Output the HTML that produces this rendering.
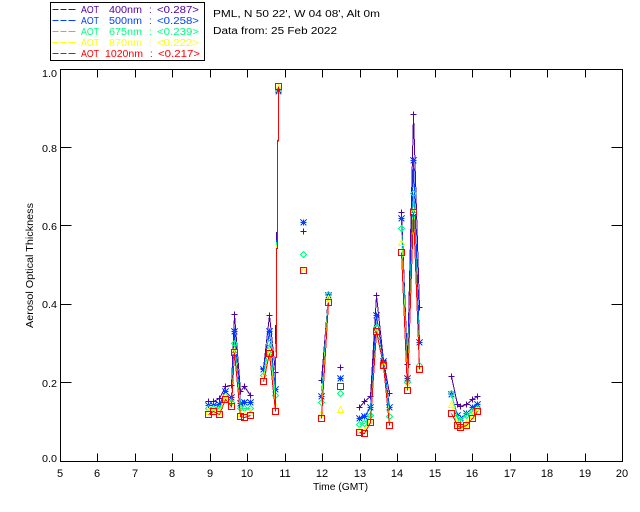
<!DOCTYPE html>
<html><head><meta charset="utf-8"><style>
html,body{margin:0;padding:0;background:#fff}
svg{display:block;font-family:"Liberation Sans",sans-serif;font-size:10px}
.c path,.c polyline,.c line,.c rect{shape-rendering:crispEdges}
path,polyline{fill:none}
</style></head><body>
<svg width="640" height="512" viewBox="0 0 640 512" xmlns="http://www.w3.org/2000/svg">
<defs>
<path id="a" d="M-3 0h6M0-3v6"/>
<path id="b" d="M-3 0h6M0-3v6M-3-3l6 6M-3 3l6-6"/>
<path id="c" d="M0-3l3 3l-3 3l-3-3z"/>
<path id="d" d="M0-3l3 6h-6z"/>
<path id="e" d="M-3-3h6v6h-6z"/>
</defs>
<g class="c" transform="translate(.5 .5)" stroke="#000" shape-rendering="crispEdges">
<path d="M60 69H622V461H60ZM97 69v8M135 69v8M172 69v8M210 69v8M247 69v8M285 69v8M322 69v8M360 69v8M397 69v8M435 69v8M472 69v8M510 69v8M547 69v8M585 69v8M97 461v-8M135 461v-8M172 461v-8M210 461v-8M247 461v-8M285 461v-8M322 461v-8M360 461v-8M397 461v-8M435 461v-8M472 461v-8M510 461v-8M547 461v-8M585 461v-8M60 147h11M60 225h11M60 304h11M60 382h11M622 147h-11M622 225h-11M622 304h-11M622 382h-11"/>
<path d="M50 2H204V60H50Z"/>
<path stroke="#5000a0" d="M52 9h6M60 9h6M68 9h7"/>
<path stroke="#0040ff" d="M52 20h6M60 20h6M68 20h7"/>
<path stroke="#00ff80" d="M52 31h6M60 31h6M68 31h7"/>
<path stroke="#ffff00" d="M52 42h6M60 42h6M68 42h7"/>
<path stroke="#ff0000" d="M52 53h6M60 53h6M68 53h7"/>
</g>
<g class="c" transform="translate(.5 .5)" shape-rendering="crispEdges">
<g stroke="#5000a0">
<polyline points="208,401 213,401 219,398 225,386 231,385 234,314 240,391 244,386 250,395"/>
<polyline points="263,368 269,315 275,372"/>
<path d="M278 92V139H277V232H276V325H275V372"/>
<polyline points="321,380 328,294"/>
<polyline points="359,407 364,401 370,396 376,295 383,360 389,393"/>
<polyline points="401,212 407,364 413,114 419,307"/>
<polyline points="451,376 457,404 460,406 466,404 472,399 477,396"/>
<use href="#a" x="208" y="401"/><use href="#a" x="213" y="401"/><use href="#a" x="219" y="398"/><use href="#a" x="225" y="386"/><use href="#a" x="231" y="385"/><use href="#a" x="234" y="314"/><use href="#a" x="240" y="391"/><use href="#a" x="244" y="386"/><use href="#a" x="250" y="395"/>
<use href="#a" x="263" y="368"/><use href="#a" x="269" y="315"/><use href="#a" x="275" y="372"/><use href="#a" x="278" y="92"/>
<use href="#a" x="303" y="231"/><use href="#a" x="321" y="380"/><use href="#a" x="328" y="294"/><use href="#a" x="340" y="367"/>
<use href="#a" x="359" y="407"/><use href="#a" x="364" y="401"/><use href="#a" x="370" y="396"/><use href="#a" x="376" y="295"/><use href="#a" x="383" y="360"/><use href="#a" x="389" y="393"/>
<use href="#a" x="401" y="212"/><use href="#a" x="407" y="364"/><use href="#a" x="413" y="114"/><use href="#a" x="419" y="307"/>
<use href="#a" x="451" y="376"/><use href="#a" x="457" y="404"/><use href="#a" x="460" y="406"/><use href="#a" x="466" y="404"/><use href="#a" x="472" y="399"/><use href="#a" x="477" y="396"/>
</g>
<g stroke="#0040ff">
<polyline points="208,405 213,405 219,404 225,391 231,397 234,331 240,403 244,402 250,402"/>
<polyline points="263,369 269,331 275,389"/>
<path d="M278 91V141H277V240H276V339H275V389"/>
<polyline points="321,396 328,295"/>
<polyline points="359,418 364,416 370,407 376,315 383,361 389,407"/>
<polyline points="401,218 407,378 413,160 419,342"/>
<polyline points="451,394 457,415 460,418 466,413 472,407 477,404"/>
<use href="#b" x="208" y="405"/><use href="#b" x="213" y="405"/><use href="#b" x="219" y="404"/><use href="#b" x="225" y="391"/><use href="#b" x="231" y="397"/><use href="#b" x="234" y="331"/><use href="#b" x="240" y="403"/><use href="#b" x="244" y="402"/><use href="#b" x="250" y="402"/>
<use href="#b" x="263" y="369"/><use href="#b" x="269" y="331"/><use href="#b" x="275" y="389"/><use href="#b" x="278" y="91"/>
<use href="#b" x="303" y="222"/><use href="#b" x="321" y="396"/><use href="#b" x="328" y="295"/><use href="#b" x="340" y="378"/>
<use href="#b" x="359" y="418"/><use href="#b" x="364" y="416"/><use href="#b" x="370" y="407"/><use href="#b" x="376" y="315"/><use href="#b" x="383" y="361"/><use href="#b" x="389" y="407"/>
<use href="#b" x="401" y="218"/><use href="#b" x="407" y="378"/><use href="#b" x="413" y="160"/><use href="#b" x="419" y="342"/>
<use href="#b" x="451" y="394"/><use href="#b" x="457" y="415"/><use href="#b" x="460" y="418"/><use href="#b" x="466" y="413"/><use href="#b" x="472" y="407"/><use href="#b" x="477" y="404"/>
</g>
<g stroke="#00ff80">
<polyline points="208,408 213,408 219,408 225,396 231,402 234,343 240,408 244,408 250,408"/>
<polyline points="263,375 269,343 275,395"/>
<path d="M278 90V141H277V242H276V344H275V395"/>
<polyline points="321,402 328,294"/>
<polyline points="359,424 364,423 370,415 376,327 383,365 389,416"/>
<polyline points="401,228 407,382 413,193 419,365"/>
<polyline points="451,393 457,418 460,420 466,415 472,411 477,408"/>
<use href="#c" x="208" y="408"/><use href="#c" x="213" y="408"/><use href="#c" x="219" y="408"/><use href="#c" x="225" y="396"/><use href="#c" x="231" y="402"/><use href="#c" x="234" y="343"/><use href="#c" x="240" y="408"/><use href="#c" x="244" y="408"/><use href="#c" x="250" y="408"/>
<use href="#c" x="263" y="375"/><use href="#c" x="269" y="343"/><use href="#c" x="275" y="395"/><use href="#c" x="278" y="90"/>
<use href="#c" x="303" y="254"/><use href="#c" x="321" y="402"/><use href="#c" x="328" y="294"/><use href="#c" x="340" y="393"/>
<use href="#c" x="359" y="424"/><use href="#c" x="364" y="423"/><use href="#c" x="370" y="415"/><use href="#c" x="376" y="327"/><use href="#c" x="383" y="365"/><use href="#c" x="389" y="416"/>
<use href="#c" x="401" y="228"/><use href="#c" x="407" y="382"/><use href="#c" x="413" y="193"/><use href="#c" x="419" y="365"/>
<use href="#c" x="451" y="393"/><use href="#c" x="457" y="418"/><use href="#c" x="460" y="420"/><use href="#c" x="466" y="415"/><use href="#c" x="472" y="411"/><use href="#c" x="477" y="408"/>
</g>
<g stroke="#ffff00">
<polyline points="208,411 213,409 219,411 225,396 231,404 234,350 240,413 244,414 250,412"/>
<polyline points="263,378 269,350 275,405"/>
<path d="M278 86V139H277V245H276V352H275V405"/>
<polyline points="321,413 328,298"/>
<polyline points="359,430 364,430 370,420 376,330 383,365 389,422"/>
<polyline points="401,242 407,385 413,210 419,368"/>
<polyline points="451,404 457,423 460,425 466,423 472,415 477,410"/>
<use href="#d" x="208" y="411"/><use href="#d" x="213" y="409"/><use href="#d" x="219" y="411"/><use href="#d" x="225" y="396"/><use href="#d" x="231" y="404"/><use href="#d" x="234" y="350"/><use href="#d" x="240" y="413"/><use href="#d" x="244" y="414"/><use href="#d" x="250" y="412"/>
<use href="#d" x="263" y="378"/><use href="#d" x="269" y="350"/><use href="#d" x="275" y="405"/><use href="#d" x="278" y="86"/>
<use href="#d" x="303" y="270"/><use href="#d" x="321" y="413"/><use href="#d" x="328" y="298"/><use href="#d" x="340" y="409"/>
<use href="#d" x="359" y="430"/><use href="#d" x="364" y="430"/><use href="#d" x="370" y="420"/><use href="#d" x="376" y="330"/><use href="#d" x="383" y="365"/><use href="#d" x="389" y="422"/>
<use href="#d" x="401" y="242"/><use href="#d" x="407" y="385"/><use href="#d" x="413" y="210"/><use href="#d" x="419" y="368"/>
<use href="#d" x="451" y="404"/><use href="#d" x="457" y="423"/><use href="#d" x="460" y="425"/><use href="#d" x="466" y="423"/><use href="#d" x="472" y="415"/><use href="#d" x="477" y="410"/>
</g>
<g stroke="#ff0000">
<polyline points="208,414 213,411 219,414 225,399 231,406 234,352 240,416 244,417 250,415"/>
<polyline points="263,381 269,353 275,411"/>
<path d="M278 86V140H277V248H276V357H275V411"/>
<polyline points="321,418 328,302"/>
<polyline points="359,432 364,433 370,422 376,331 383,365 389,425"/>
<polyline points="401,252 407,390 413,212 419,369"/>
<polyline points="451,413 457,425 460,427 466,425 472,418 477,411"/>
<use href="#e" x="208" y="414"/><use href="#e" x="213" y="411"/><use href="#e" x="219" y="414"/><use href="#e" x="225" y="399"/><use href="#e" x="231" y="406"/><use href="#e" x="234" y="352"/><use href="#e" x="240" y="416"/><use href="#e" x="244" y="417"/><use href="#e" x="250" y="415"/>
<use href="#e" x="263" y="381"/><use href="#e" x="269" y="353"/><use href="#e" x="275" y="411"/><use href="#e" x="278" y="86"/>
<use href="#e" x="303" y="270"/><use href="#e" x="321" y="418"/><use href="#e" x="328" y="302"/><use href="#e" x="340" y="386"/>
<use href="#e" x="359" y="432"/><use href="#e" x="364" y="433"/><use href="#e" x="370" y="422"/><use href="#e" x="376" y="331"/><use href="#e" x="383" y="365"/><use href="#e" x="389" y="425"/>
<use href="#e" x="401" y="252"/><use href="#e" x="407" y="390"/><use href="#e" x="413" y="212"/><use href="#e" x="419" y="369"/>
<use href="#e" x="451" y="413"/><use href="#e" x="457" y="425"/><use href="#e" x="460" y="427"/><use href="#e" x="466" y="425"/><use href="#e" x="472" y="418"/><use href="#e" x="477" y="411"/>
</g>
</g>
<g fill="#5000a0"><text x="81" y="13" textLength="18" lengthAdjust="spacingAndGlyphs">AOT</text><text x="109" y="13" textLength="33" lengthAdjust="spacingAndGlyphs">400nm</text><text x="149" y="13">:</text><text x="157" y="13" textLength="42" lengthAdjust="spacingAndGlyphs">&lt;0.287&gt;</text></g>
<g fill="#0040ff"><text x="81" y="24" textLength="18" lengthAdjust="spacingAndGlyphs">AOT</text><text x="109" y="24" textLength="33" lengthAdjust="spacingAndGlyphs">500nm</text><text x="149" y="24">:</text><text x="157" y="24" textLength="42" lengthAdjust="spacingAndGlyphs">&lt;0.258&gt;</text></g>
<g fill="#00ff80"><text x="81" y="35" textLength="18" lengthAdjust="spacingAndGlyphs">AOT</text><text x="109" y="35" textLength="33" lengthAdjust="spacingAndGlyphs">675nm</text><text x="149" y="35">:</text><text x="157" y="35" textLength="42" lengthAdjust="spacingAndGlyphs">&lt;0.239&gt;</text></g>
<g fill="#ffff00"><text x="81" y="46" textLength="18" lengthAdjust="spacingAndGlyphs">AOT</text><text x="109" y="46" textLength="33" lengthAdjust="spacingAndGlyphs">870nm</text><text x="149" y="46">:</text><text x="157" y="46" textLength="42" lengthAdjust="spacingAndGlyphs">&lt;0.222&gt;</text></g>
<g fill="#ff0000"><text x="81" y="57" textLength="18" lengthAdjust="spacingAndGlyphs">AOT</text><text x="105" y="57" textLength="38" lengthAdjust="spacingAndGlyphs">1020nm</text><text x="150" y="57">:</text><text x="158" y="57" textLength="42" lengthAdjust="spacingAndGlyphs">&lt;0.217&gt;</text></g>
<g fill="#000">
<text x="213" y="17" textLength="167" lengthAdjust="spacingAndGlyphs">PML, N 50 22', W 04 08', Alt 0m</text>
<text x="213" y="34" textLength="124" lengthAdjust="spacingAndGlyphs">Data from: 25 Feb 2022</text>
<g style="font-size:10.5px">
<text x="42" y="77" textLength="15" lengthAdjust="spacingAndGlyphs">1.0</text><text x="42" y="152" textLength="15" lengthAdjust="spacingAndGlyphs">0.8</text><text x="42" y="230" textLength="15" lengthAdjust="spacingAndGlyphs">0.6</text><text x="42" y="308" textLength="15" lengthAdjust="spacingAndGlyphs">0.4</text><text x="42" y="387" textLength="15" lengthAdjust="spacingAndGlyphs">0.2</text><text x="42" y="462" textLength="15" lengthAdjust="spacingAndGlyphs">0.0</text>
</g>
<g text-anchor="middle" style="font-size:11px">
<text x="60" y="477">5</text><text x="97" y="477">6</text><text x="135" y="477">7</text><text x="172" y="477">8</text><text x="210" y="477">9</text><text x="247" y="477">10</text><text x="285" y="477">11</text><text x="322" y="477">12</text><text x="360" y="477">13</text><text x="397" y="477">14</text><text x="435" y="477">15</text><text x="472" y="477">16</text><text x="510" y="477">17</text><text x="547" y="477">18</text><text x="585" y="477">19</text><text x="622" y="477">20</text>
</g>
<text x="313" y="490" textLength="55" lengthAdjust="spacingAndGlyphs">Time (GMT)</text>
<text transform="translate(33 328) rotate(-90)" textLength="125" lengthAdjust="spacingAndGlyphs">Aerosol Optical Thickness</text>
</g>
</svg>
</body></html>
